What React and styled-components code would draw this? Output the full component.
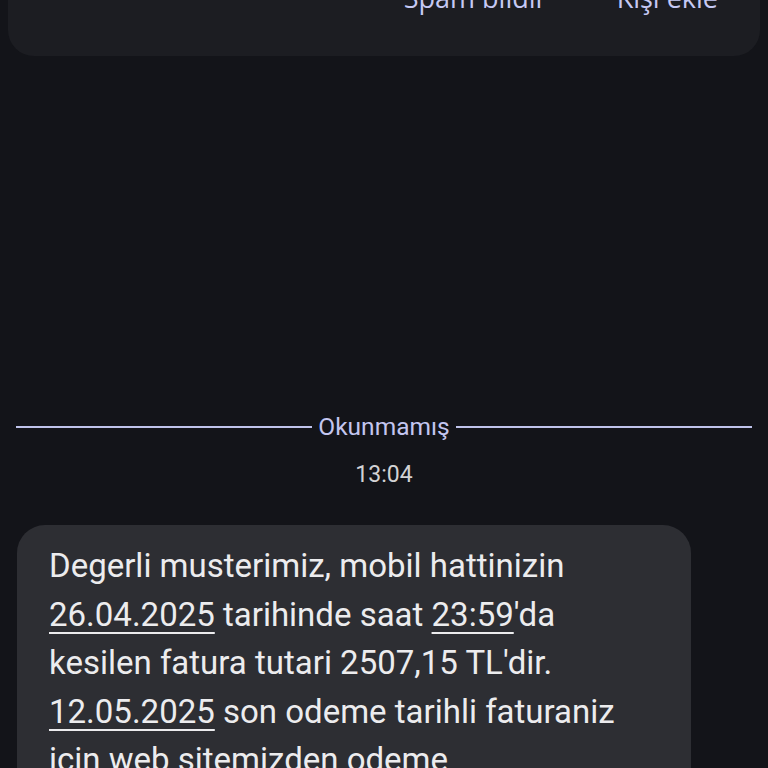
import styled, { createGlobalStyle } from "styled-components";

const GlobalStyle = createGlobalStyle`
  html, body {
    margin: 0;
    padding: 0;
    background: #131419;
    overflow: hidden;
  }
`;

const Page = styled.div`
  width: 768px;
  height: 768px;
  overflow: hidden;
  display: flex;
  flex-direction: column;
  font-family: Roboto, "Noto Sans", sans-serif;
`;

const ActionCard = styled.div`
  margin: -17px 8px 0;
  padding: 0 42px 43px 0;
  background: #1c1d22;
  border-radius: 0 0 26px 26px;
  display: flex;
  justify-content: flex-end;
  gap: 70px;
`;

const ActionButton = styled.span`
  font-family: "Open Sans", "Noto Sans", sans-serif;
  font-size: 27px;
  line-height: 30px;
  color: #c6c9f4;
`;

const Divider = styled.div`
  margin: 357px 16px 0;
  display: flex;
  align-items: center;
  gap: 6px;
  height: 28px;

  &::before,
  &::after {
    content: "";
    flex: 1;
    height: 2px;
    background: #bfc3ea;
  }
`;

const DividerLabel = styled.span`
  font-size: 24.5px;
  line-height: 28px;
  color: #c3c6f0;
`;

const Time = styled.div`
  margin-top: 20px;
  text-align: center;
  font-size: 23px;
  line-height: 28px;
  color: #d2d2d4;
`;

const Bubble = styled.div`
  margin: 36px 0 0 17px;
  width: 674px;
  box-sizing: border-box;
  background: #2d2e33;
  border-radius: 28px;
  padding: 17px 20px 20px 32px;
`;

const MessageText = styled.p`
  margin: 0;
  font-size: 33px;
  line-height: 48.5px;
  color: #ececee;
`;

const Link = styled.span`
  text-decoration: underline;
  text-decoration-thickness: 2px;
  text-underline-offset: 6px;
`;

export default function App() {
  return (
    <Page>
      <GlobalStyle />
      <ActionCard>
        <ActionButton>Spam bildir</ActionButton>
        <ActionButton>Kişi ekle</ActionButton>
      </ActionCard>
      <Divider>
        <DividerLabel>Okunmamış</DividerLabel>
      </Divider>
      <Time>13:04</Time>
      <Bubble>
        <MessageText>
          Degerli musterimiz, mobil hattinizin
          <br />
          <Link>26.04.2025</Link> tarihinde saat <Link>23:59</Link>'da
          <br />
          kesilen fatura tutari 2507,15 TL'dir.
          <br />
          <Link>12.05.2025</Link> son odeme tarihli faturaniz
          <br />
          icin web sitemizden odeme
          <br />
          yapabilirsiniz.
        </MessageText>
      </Bubble>
    </Page>
  );
}
